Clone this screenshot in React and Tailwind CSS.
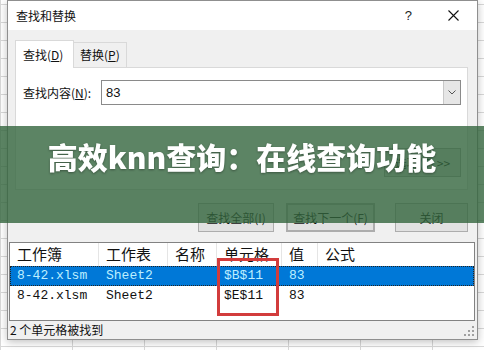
import React from "react";

const ui = { fontFamily: '"Noto Sans CJK SC", "Noto Sans", sans-serif' };
const mono = { fontFamily: '"Liberation Mono", "Noto Sans CJK SC", monospace' };

function Btn({ children, className = "" }) {
  return (
    <div
      className={`h-[29px] flex items-center justify-center bg-[#e1e1e1] border border-[#adadad] text-[12px] text-[#111] ${className}`}
    >
      {children}
    </div>
  );
}

export default function App() {
  const cols = [
    { w: "w-[89px]", t: "工作簿" },
    { w: "w-[69px]", t: "工作表" },
    { w: "w-[49px]", t: "名称" },
    { w: "w-[65px]", t: "单元格" },
    { w: "w-[36px]", t: "值" },
    { w: "flex-1", t: "公式" },
  ];
  const rows = [
    { sel: true, c: ["8-42.xlsm", "Sheet2", "", "$B$11", "83", ""] },
    { sel: false, c: ["8-42.xlsm", "Sheet2", "", "$E$11", "83", ""] },
  ];
  return (
    <div
      className="relative w-[484px] h-[350px] overflow-hidden bg-white bg-[linear-gradient(to_right,#d8d8d8_1px,transparent_1px),linear-gradient(to_bottom,#d8d8d8_1px,transparent_1px)] bg-[size:72px_18px] bg-[position:0px_4px]"
      style={ui}
    >
      {/* dialog window */}
      <div className="absolute left-[7px] top-0 w-[471px] h-[340px] border border-[#8f8f8f] bg-[#f0f0f0] flex flex-col shadow-[0_2px_8px_rgba(0,0,0,0.25)]">
        {/* title bar */}
        <div className="h-[29px] bg-white flex items-center pl-[8px] pr-[16px] shrink-0">
          <div className="text-[12px] text-[#111] flex-1">查找和替换</div>
          <div className="text-[13px] text-[#222] mr-[36px]" style={{ fontFamily: '"Liberation Sans", sans-serif' }}>?</div>
          <svg width="11" height="11" viewBox="0 0 11 11" className="mr-[2px]">
            <path d="M0.5 0.5 L10.5 10.5 M10.5 0.5 L0.5 10.5" stroke="#111" strokeWidth="1.1" />
          </svg>
        </div>

        {/* tabs */}
        <div className="pt-[10px] pl-[7px] flex items-end shrink-0">
          <div className="relative z-10 w-[59px] h-[28px] bg-white border border-[#d9d9d9] border-b-0 flex items-center pl-[7px] text-[12px] text-[#111]">
            查找(<span className="underline">D</span>)
          </div>
          <div className="w-[53px] h-[25px] mb-[1px] bg-[#f0f0f0] border border-[#d9d9d9] border-l-0 border-b-0 flex items-center pl-[6px] text-[12px] text-[#111]">
            替换(<span className="underline">P</span>)
          </div>
        </div>

        {/* panel */}
        <div className="-mt-[1px] ml-[7px] w-[453px] h-[123px] bg-white border border-[#d9d9d9] flex flex-col shrink-0">
          <div className="mt-[12px] flex items-center pl-[7px] pr-[6px]">
            <div className="w-[78px] text-[12px] text-[#111]">
              查找内容(<span className="underline">N</span>):
            </div>
            <div className="flex-1 h-[25px] border border-[#8a8a8a] flex items-center bg-white">
              <div className="flex-1 pl-[4px] text-[13px] text-[#111]" style={{ fontFamily: '"Liberation Sans", sans-serif' }}>83</div>
              <div className="w-[17px] h-[23px] bg-[#e6e6e6] border-l border-[#c8c8c8] flex items-center justify-center">
                <svg width="8" height="5" viewBox="0 0 8 5">
                  <path d="M0.5 0.5 L4 4 L7.5 0.5" fill="none" stroke="#555" strokeWidth="1" />
                </svg>
              </div>
            </div>
          </div>
          <div className="mt-[43px] flex justify-end pr-[6px]">
            <Btn className="w-[77px] h-[28px]">选项(T) &gt;&gt;</Btn>
          </div>
        </div>

        {/* buttons */}
        <div className="mt-[13px] flex justify-end pr-[9px] gap-[12px] shrink-0">
          <Btn className="w-[76px]">查找全部(I)</Btn>
          <Btn className="w-[89px] border-2 border-[#0078d7]">查找下一个(F)</Btn>
          <Btn className="w-[73px] ml-[8px]">关闭</Btn>
        </div>

        {/* results list */}
        <div className="relative mt-[10px] mx-[1px] mr-[2px] h-[79px] bg-white border border-[#828282] shrink-0">
          <div className="flex h-[23px] items-center">
            {cols.map((c, i) => (
              <div
                key={i}
                className={`${c.w} h-full flex items-center pl-[7px] text-[15px] text-[#111] ${i < 5 ? "border-r border-[#e5e5e5]" : ""}`}
              >
                {c.t}
              </div>
            ))}
          </div>
          {rows.map((r, ri) => (
            <div
              key={ri}
              className={`flex h-[20px] items-center ${r.sel ? "bg-[#0078d7] outline-1 outline-dotted outline-[#222] -outline-offset-1" : ""}`}
            >
              {cols.map((c, i) => (
                <div
                  key={i}
                  className={`${c.w} pl-[7px] text-[13px] whitespace-nowrap ${r.sel ? "text-[#bdefff]" : "text-[#111]"}`}
                  style={mono}
                >
                  {r.c[i]}
                </div>
              ))}
            </div>
          ))}
          {/* red highlight box */}
          <div className="absolute left-[207px] top-[15px] w-[62px] h-[58px] border-[3px] border-[#d23c3c]" />
        </div>

        {/* status bar */}
        <div className="relative flex-1 flex items-center pl-[2px] text-[12px] text-[#111]">
          2 个单元格被找到
          <svg width="10" height="10" viewBox="0 0 10 10" className="absolute right-[3px] bottom-[3px]">
            <g fill="#a0a0a0">
              <rect x="8" y="0" width="2" height="2" />
              <rect x="4" y="4" width="2" height="2" />
              <rect x="8" y="4" width="2" height="2" />
              <rect x="0" y="8" width="2" height="2" />
              <rect x="4" y="8" width="2" height="2" />
              <rect x="8" y="8" width="2" height="2" />
            </g>
          </svg>
        </div>
      </div>

      {/* green caption overlay */}
      <div className="absolute left-0 top-[126px] w-full h-[97px] bg-[rgba(51,101,61,0.8)] flex justify-center pt-[15px]">
        <div
          className="text-[30px] leading-none font-black text-white tracking-[0px] drop-shadow-[0_1px_1px_rgba(0,0,0,0.35)]"
          style={{ fontFamily: '"Noto Sans CJK SC", "Noto Sans", sans-serif' }}
        >
          高效knn查询：在线查询功能
        </div>
      </div>
    </div>
  );
}
